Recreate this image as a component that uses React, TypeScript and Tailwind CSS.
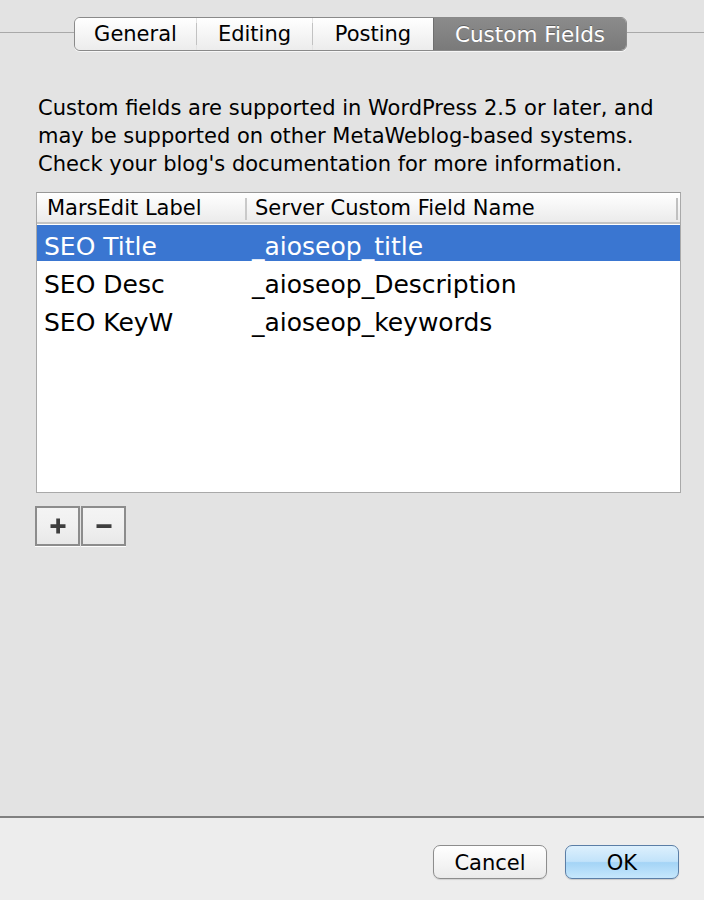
const tabs = [
  { label: 'General', w: 'w-[121px]' },
  { label: 'Editing', w: 'w-[115px]' },
  { label: 'Posting', w: 'w-[120px]' },
]

const rows = [
  { label: 'SEO Title', field: '_aioseop_title', selected: true },
  { label: 'SEO Desc', field: '_aioseop_Description', selected: false },
  { label: 'SEO KeyW', field: '_aioseop_keywords', selected: false },
]

function TabBar() {
  return (
    <div className="flex items-start pt-[17px]">
      <div className="w-[74px] h-px mt-[15px] bg-[#a9a9a9]" />
      <div className="flex h-[34px] rounded-[6px] border border-[#8a8a8a] overflow-hidden text-[21px] shadow-[0_1px_0_rgba(255,255,255,0.7)]">
        {tabs.map((t, i) => (
          <div key={t.label} className="flex items-center">
            {i > 0 && <div className="w-px h-[22px] bg-[#c2c2c2]" />}
            <div className={`${t.w} h-full pt-[2px] flex items-center justify-center bg-linear-to-b from-white to-[#ececec]`}>
              {t.label}
            </div>
          </div>
        ))}
        <div className="w-[193px] h-full pt-[2px] flex items-center justify-center border-l border-[#6f6f6f] bg-linear-to-b from-[#8b8b8b] to-[#7a7a7a] text-white text-[21.5px] [text-shadow:0_-1px_0_rgba(0,0,0,0.3)]">
          Custom Fields
        </div>
      </div>
      <div className="flex-1 h-px mt-[15px] bg-[#a9a9a9]" />
    </div>
  )
}

function FieldTable() {
  return (
    <div className="ml-[36px] mt-[14px] w-[645px] h-[301px] border border-[#a9a9a9] border-t-[#989898] bg-white flex flex-col">
      <div className="h-[31px] pt-[2px] flex items-center bg-linear-to-b from-white to-[#ebebeb] border-b-2 border-[#c4c4c4] text-[21px]">
        <div className="w-[208px] pl-[10px]">MarsEdit Label</div>
        <div className="w-[2px] h-[22px] bg-[#c9c9c9]" />
        <div className="flex-1 pl-[8px]">Server Custom Field Name</div>
        <div className="w-[2px] h-[22px] bg-[#c0c0c0] mr-[2px]" />
      </div>
      {rows.map(r => (
        <div key={r.label} className="h-[38px] py-px">
          <div
            className={`h-full flex items-start pt-[9px] text-[25px] leading-[25px] ${
              r.selected ? 'bg-[#3a76d1] text-white' : 'text-black'
            }`}
          >
            <div className="w-[208px] pl-[7px]">{r.label}</div>
            <div className="flex-1 pl-[7px]">{r.field}</div>
          </div>
        </div>
      ))}
    </div>
  )
}

function PlusMinus() {
  return (
    <div className="ml-[35px] mt-[13px] flex gap-px">
      {['plus', 'minus'].map(k => (
        <button
          key={k}
          className="w-[45px] h-[40px] flex items-center justify-center border-2 border-[#8c8c8c] bg-linear-to-b from-[#f4f4f4] via-[#f0f0f0] to-[#e8e8e8] shadow-[0_1px_0_rgba(255,255,255,0.9)]"
        >
          <svg width="16" height="16" viewBox="0 0 16 16">
            {k === 'plus' && <rect x="6.25" y="0.5" width="3.75" height="15" fill="#3e3e3e" />}
            <rect x="0.5" y="6.25" width="15" height="3.75" fill="#3e3e3e" />
          </svg>
        </button>
      ))}
    </div>
  )
}

export default function App() {
  return (
    <div className="w-[704px] h-[900px] flex flex-col bg-[#e3e3e3] text-black font-['DejaVu_Sans',sans-serif]">
      <div className="flex-1">
        <TabBar />
        <p className="mt-[43px] px-[38px] text-[21px] leading-[28px]">
          Custom fields are supported in WordPress 2.5 or later, and
          <br />
          may be supported on other MetaWeblog-based systems.
          <br />
          Check your blog's documentation for more information.
        </p>
        <FieldTable />
        <PlusMinus />
      </div>
      <div className="h-[84px] border-t-2 border-[#808080] bg-[#ededed] flex justify-end items-start pt-[27px] pr-[25px] gap-[18px] text-[21px]">
        <button className="w-[114px] h-[34px] pt-[2px] rounded-[7px] border border-[#8d8d8d] bg-linear-to-b from-white to-[#ebebeb] shadow-[0_1px_1px_rgba(0,0,0,0.12)]">
          Cancel
        </button>
        <button className="w-[114px] h-[34px] pt-[2px] rounded-[7px] border border-[#5b7ea6] bg-[linear-gradient(to_bottom,#ddf0fd_0%,#c2e3fa_48%,#a4d4f6_52%,#c6e7fc_100%)] shadow-[0_1px_1px_rgba(0,0,0,0.15)]">
          OK
        </button>
      </div>
    </div>
  )
}
